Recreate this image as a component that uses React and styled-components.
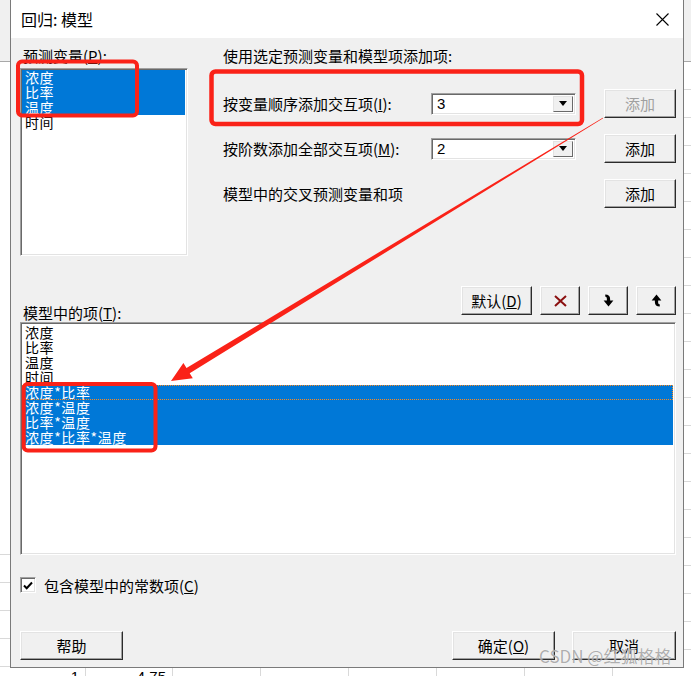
import React from 'react'
import styled, { createGlobalStyle } from 'styled-components'

const UI_FONT = '"Noto Sans CJK SC", "Liberation Sans", sans-serif'
const RED = '#fa2218'

const GlobalStyle = createGlobalStyle`
  html, body { margin: 0; padding: 0; }
  body {
    width: 691px;
    height: 676px;
    overflow: hidden;
    background: #fff;
    font-family: ${UI_FONT};
  }
`

const Screen = styled.div`
  position: relative;
  width: 691px;
  height: 676px;
  overflow: hidden;
`

const Desk = styled.div`
  display: flex;
`

// strips of the spreadsheet that peek out behind the dialog
const SheetEdge = styled.div`
  width: ${p => p.$w}px;
  flex: none;
  background:
    repeating-linear-gradient(to bottom, transparent 0 27px, #d9d9d9 27px 28px) 0 ${p => p.$linesFrom}px / 100% 100% no-repeat,
    linear-gradient(to bottom, #f0f0f0 0 61px, #a8a8a8 61px 62px, #fff 62px);
`

const SheetRow = styled.div`
  display: flex;
  height: 8px;
  overflow: hidden;
  background: #fff;
`

const SheetCell = styled.div`
  width: ${p => p.$w}px;
  flex: none;
  box-sizing: border-box;
  border-right: 1px solid #d9d9d9;
  text-align: right;
  padding: 1px 6px 0 0;
  font: 15px/15px "Liberation Sans", sans-serif;
  color: #000;
`

const Dialog = styled.div`
  width: 674px;
  flex: none;
  box-sizing: border-box;
  border: 1px solid #7a7a7a;
  border-top: none;
  background: #f0f0f0;
  color: #000;
`

const TitleBar = styled.div`
  height: 38px;
  background: #fff;
  display: flex;
  align-items: center;
  justify-content: space-between;
  padding: 0 14px 0 10px;
  font-size: 16px;
`

const Body = styled.div`
  padding: 8px 7px 7px 9px;
  display: flex;
  flex-direction: column;
  font-size: 15px;
`

const Top = styled.div`
  display: flex;
  align-items: flex-start;
`

const LeftCol = styled.div`
  width: 168px;
  flex: none;
  display: flex;
  flex-direction: column;
`

const RightCol = styled.div`
  margin-left: 35px;
  flex: 1;
  display: flex;
  flex-direction: column;
`

const Caption = styled.div`
  height: 20px;
  line-height: 20px;
  padding-left: ${p => p.$indent || 0}px;
  white-space: nowrap;
`

const ListBox = styled.div`
  width: ${p => p.$w};
  height: ${p => p.$h}px;
  margin-top: ${p => p.$top || 0}px;
  box-sizing: border-box;
  background: #fff;
  border: 1px solid;
  border-color: #a0a0a0 #fff #fff #a0a0a0;
  box-shadow: inset 1px 1px 0 #696969, inset -1px -1px 0 #e3e3e3;
  padding: ${p => p.$padTop}px 2px 0 1px;
  overflow: hidden;
`

const Item = styled.div`
  height: 15px;
  line-height: 15px;
  padding-left: 3px;
  font-size: 14px;
  letter-spacing: 0.6px;
  white-space: nowrap;
  background: ${p => (p.$sel ? '#0078d7' : 'transparent')};
  color: ${p => (p.$sel ? '#fff' : '#000')};
  outline: ${p => (p.$focus ? '1px dotted #ff8a1c' : 'none')};
  outline-offset: -1px;
`

const ActionRow = styled.div`
  display: flex;
  align-items: center;
  height: 29px;
  margin-top: ${p => p.$top}px;
`

const RowLabel = styled.div`
  width: 208px;
  flex: none;
  white-space: nowrap;
`

const Combo = styled.div`
  width: 145px;
  height: 22px;
  flex: none;
  box-sizing: border-box;
  background: #fff;
  border: 1px solid;
  border-color: #a0a0a0 #fff #fff #a0a0a0;
  box-shadow: inset 1px 1px 0 #696969, inset -1px -1px 0 #e3e3e3;
  padding: 2px;
  display: flex;
  align-items: center;
`

const ComboValue = styled.span`
  flex: 1;
  padding-left: 3px;
  font: 15px/18px "Liberation Sans", sans-serif;
`

const DropButton = styled.span`
  width: 20px;
  height: 100%;
  box-sizing: border-box;
  background: #f0f0f0;
  border: 1px solid;
  border-color: #e3e3e3 #696969 #696969 #e3e3e3;
  display: flex;
  align-items: center;
  justify-content: center;

  &::after {
    content: '';
    border-left: 4px solid transparent;
    border-right: 4px solid transparent;
    border-top: 5px solid #000;
  }
`

const Spacer = styled.div`
  flex: 1;
`

const Button = styled.button`
  width: ${p => p.$w}px;
  height: 29px;
  flex: none;
  box-sizing: border-box;
  margin: 0;
  padding: 0;
  background: #f0f0f0;
  border: 1px solid;
  border-color: #fff #2b2b2b #2b2b2b #fff;
  box-shadow: inset -1px -1px 0 #a0a0a0, inset 1px 1px 0 #e3e3e3;
  font-family: ${UI_FONT};
  font-size: 15px;
  color: ${p => (p.disabled ? '#a0a0a0' : '#000')};
  display: flex;
  align-items: center;
  justify-content: center;
`

const Toolbar = styled.div`
  display: flex;
  align-items: flex-start;
  margin-top: 30px;
`

const ToolLabel = styled.div`
  margin-top: 19px;
  padding-left: 3px;
  line-height: 16px;
  white-space: nowrap;
`

const ToolButtons = styled.div`
  margin-left: auto;
  display: flex;
  gap: 8px;
`

const CheckRow = styled.label`
  display: flex;
  align-items: center;
  height: 16px;
  margin-top: 22px;
  gap: 8px;
`

const CheckBox = styled.span`
  width: 16px;
  height: 16px;
  box-sizing: border-box;
  background: #fff;
  border: 1px solid;
  border-color: #a0a0a0 #fff #fff #a0a0a0;
  box-shadow: inset 1px 1px 0 #696969, inset -1px -1px 0 #e3e3e3;
  display: flex;
  align-items: center;
  justify-content: center;
`

const Footer = styled.div`
  display: flex;
  align-items: center;
  gap: 17px;
  margin-top: 38px;
`

const Overlay = styled.svg`
  position: absolute;
  left: 0;
  top: 0;
  pointer-events: none;
`

const Watermark = styled.span`
  position: absolute;
  left: 539px;
  top: 645px;
  font-family: ${UI_FONT};
  font-size: 17px;
  line-height: 22px;
  color: rgba(96, 96, 96, 0.5);
  text-shadow: 0 0 1px #fff;
  white-space: nowrap;
`

const Key = ({ k }) => (
  <>
    (<u>{k}</u>)
  </>
)

const CloseIcon = () => (
  <svg width="13" height="13" viewBox="0 0 13 13">
    <path d="M0.5 0.5 L12.5 12.5 M12.5 0.5 L0.5 12.5" stroke="#000" strokeWidth="1.1" fill="none" />
  </svg>
)

const DeleteIcon = () => (
  <svg width="13" height="12" viewBox="0 0 13 12">
    <path d="M1 1 L12 11 M12 1 L1 11" stroke="#8a0f0f" strokeWidth="2" fill="none" />
  </svg>
)

const ArrowDown = ({ flip }) => (
  <svg width="11" height="13" viewBox="0 0 10 12" style={flip ? { transform: 'rotate(180deg)' } : undefined}>
    <path d="M2 0.5 C5 0.5 6.5 2 6.5 4.5 V6 H9.5 L5 11.5 L0.5 6 H3.5 V4.5 C3.5 3.2 3 2.6 2 2.6 Z" fill="#000" />
  </svg>
)

const CheckMark = () => (
  <svg width="10" height="9" viewBox="0 0 10 9">
    <path d="M1 4.5 L3.7 7.2 L9 1.5" stroke="#000" strokeWidth="2" fill="none" />
  </svg>
)

// tapered arrow from the disabled button down to the new terms
function arrowPoints() {
  const S = [603, 118]
  const T = [171, 381]
  const dx = T[0] - S[0]
  const dy = T[1] - S[1]
  const len = Math.hypot(dx, dy)
  const u = [dx / len, dy / len]
  const n = [-u[1], u[0]]
  const B = [T[0] - 20 * u[0], T[1] - 20 * u[1]]
  const at = (p, k) => `${(p[0] + k * n[0]).toFixed(1)},${(p[1] + k * n[1]).toFixed(1)}`
  return [at(S, -0.4), at(B, -3.1), at(B, -9), `${T[0]},${T[1]}`, at(B, 9), at(B, 3.1), at(S, 0.4)].join(' ')
}

const predictors = [
  { name: '浓度', sel: true },
  { name: '比率', sel: true },
  { name: '温度', sel: true },
  { name: '时间' },
]

const terms = [
  { name: '浓度' },
  { name: '比率' },
  { name: '温度' },
  { name: '时间' },
  { name: '浓度*比率', sel: true, focus: true },
  { name: '浓度*温度', sel: true },
  { name: '比率*温度', sel: true },
  { name: '浓度*比率*温度', sel: true },
]

const sheetCells = [
  { w: 86, text: '1' },
  { w: 87, text: '4.75' },
  { w: 88 }, { w: 88 }, { w: 88 }, { w: 88 }, { w: 88 }, { w: 88 },
]

export default function App() {
  return (
    <Screen>
      <GlobalStyle />
      <Desk>
        <SheetEdge $w={10} $linesFrom={527} />
        <Dialog>
          <TitleBar>
            <span>回归: 模型</span>
            <CloseIcon />
          </TitleBar>
          <Body>
            <Top>
              <LeftCol>
                <Caption $indent={3}>预测变量<Key k="P" />:</Caption>
                <ListBox $w="168px" $h={188} $top={2} $padTop={1}>
                  {predictors.map(p => (
                    <Item key={p.name} $sel={p.sel}>{p.name}</Item>
                  ))}
                </ListBox>
              </LeftCol>
              <RightCol>
                <Caption>使用选定预测变量和模型项添加项:</Caption>
                <ActionRow $top={23}>
                  <RowLabel>按变量顺序添加交互项<Key k="I" />:</RowLabel>
                  <Combo>
                    <ComboValue>3</ComboValue>
                    <DropButton />
                  </Combo>
                  <Spacer />
                  <Button $w={72} disabled>添加</Button>
                </ActionRow>
                <ActionRow $top={16}>
                  <RowLabel>按阶数添加全部交互项<Key k="M" />:</RowLabel>
                  <Combo>
                    <ComboValue>2</ComboValue>
                    <DropButton />
                  </Combo>
                  <Spacer />
                  <Button $w={72}>添加</Button>
                </ActionRow>
                <ActionRow $top={16}>
                  <RowLabel>模型中的交叉预测变量和项</RowLabel>
                  <Spacer />
                  <Button $w={72}>添加</Button>
                </ActionRow>
              </RightCol>
            </Top>

            <Toolbar>
              <ToolLabel>模型中的项<Key k="T" />:</ToolLabel>
              <ToolButtons>
                <Button $w={71}>默认<Key k="D" /></Button>
                <Button $w={40}><DeleteIcon /></Button>
                <Button $w={40}><ArrowDown /></Button>
                <Button $w={40}><ArrowDown flip /></Button>
              </ToolButtons>
            </Toolbar>

            <ListBox $w="100%" $h={233} $top={1} $padTop={2}>
              {terms.map(t => (
                <Item key={t.name} $sel={t.sel} $focus={t.focus}>{t.name}</Item>
              ))}
            </ListBox>

            <CheckRow>
              <CheckBox><CheckMark /></CheckBox>
              <span>包含模型中的常数项<Key k="C" /></span>
            </CheckRow>

            <Footer>
              <Button $w={103}>帮助</Button>
              <Spacer />
              <Button $w={103}>确定<Key k="O" /></Button>
              <Button $w={104}>取消</Button>
            </Footer>
          </Body>
        </Dialog>
        <SheetEdge $w={8} $linesFrom={62} />
      </Desk>
      <SheetRow>
        {sheetCells.map((c, i) => (
          <SheetCell key={i} $w={c.w}>{c.text}</SheetCell>
        ))}
      </SheetRow>

      <Overlay width="691" height="676" viewBox="0 0 691 676">
        <g fill="none" stroke={RED} strokeLinejoin="round">
          <rect x="18" y="61.5" width="119" height="54" rx="4" strokeWidth="4" />
          <rect x="211.5" y="71.5" width="370.5" height="52.5" rx="4" strokeWidth="4.5" />
          <rect x="23.7" y="384" width="131.8" height="66.5" rx="4" strokeWidth="4" />
        </g>
        <polygon points={arrowPoints()} fill={RED} />
      </Overlay>
      <Watermark>CSDN @红狐格格</Watermark>
    </Screen>
  )
}
